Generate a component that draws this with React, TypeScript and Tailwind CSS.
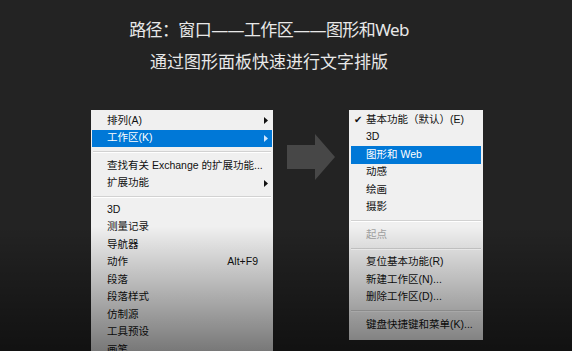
import React from "react";

type Item =
  | { kind: "sep" }
  | { kind: "row"; label: string; active?: boolean; sub?: boolean; shortcut?: string; check?: boolean; disabled?: boolean };

const leftItems: Item[] = [
  { kind: "row", label: "排列(A)", sub: true },
  { kind: "row", label: "工作区(K)", sub: true, active: true },
  { kind: "sep" },
  { kind: "row", label: "查找有关 Exchange 的扩展功能..." },
  { kind: "row", label: "扩展功能", sub: true },
  { kind: "sep" },
  { kind: "row", label: "3D" },
  { kind: "row", label: "测量记录" },
  { kind: "row", label: "导航器" },
  { kind: "row", label: "动作", shortcut: "Alt+F9" },
  { kind: "row", label: "段落" },
  { kind: "row", label: "段落样式" },
  { kind: "row", label: "仿制源" },
  { kind: "row", label: "工具预设" },
  { kind: "row", label: "画笔" },
];

const rightItems: Item[] = [
  { kind: "row", label: "基本功能（默认）(E)", check: true },
  { kind: "row", label: "3D" },
  { kind: "row", label: "图形和 Web", active: true },
  { kind: "row", label: "动感" },
  { kind: "row", label: "绘画" },
  { kind: "row", label: "摄影" },
  { kind: "sep" },
  { kind: "row", label: "起点", disabled: true },
  { kind: "sep" },
  { kind: "row", label: "复位基本功能(R)" },
  { kind: "row", label: "新建工作区(N)..." },
  { kind: "row", label: "删除工作区(D)..." },
  { kind: "sep" },
  { kind: "row", label: "键盘快捷键和菜单(K)..." },
];

function SubArrow({ white }: { white?: boolean }) {
  return (
    <svg width="4" height="7" viewBox="0 0 4 7" className="shrink-0">
      <path d="M0 0 L4 3.5 L0 7 Z" fill={white ? "#cfe6ff" : "#111"} />
    </svg>
  );
}

function Sep({ h }: { h: string }) {
  return (
    <div className={`flex flex-col justify-center px-[2px] ${h}`}>
      <div className="border-t border-[#d2d2d2] border-b border-b-white" />
    </div>
  );
}

function LeftMenu() {
  return (
    <div className="w-[182px] shrink-0 bg-[#f0f0f0] pt-[2px] pb-[4px]">
      {leftItems.map((it, i) => {
        if (it.kind === "sep") return <Sep key={i} h={i === 2 ? "h-[10px]" : "h-[9px]"} />;
        return (
          <div
            key={i}
            className={`mx-[1px] flex h-[17.5px] items-center pl-[15px] ${it.sub ? "pr-[4px]" : "pr-[14px]"} ${
              it.active ? "bg-[#0078d7] text-white" : "text-[#111]"
            }`}
          >
            <span className="flex-1 whitespace-nowrap">{it.label}</span>
            {it.shortcut && <span>{it.shortcut}</span>}
            {it.sub && <SubArrow white={it.active} />}
          </div>
        );
      })}
    </div>
  );
}

function RightMenu() {
  return (
    <div className="w-[134px] shrink-0 self-start bg-[#f0f0f0] pt-[1px] pb-[6px]">
      {rightItems.map((it, i) => {
        if (it.kind === "sep") return <Sep key={i} h="h-[10px]" />;
        return (
          <div
            key={i}
            className={`mx-[2px] flex h-[17.5px] items-center ${
              it.active ? "bg-[#0078d7] text-white" : it.disabled ? "text-[#a3a3a3]" : "text-[#111]"
            }`}
          >
            <span className="w-[15px] shrink-0 pl-[3px] text-[10px] leading-none">{it.check ? "✔" : ""}</span>
            <span className="whitespace-nowrap">{it.label}</span>
          </div>
        );
      })}
    </div>
  );
}

export default function App() {
  return (
    <div
      className="relative h-[351px] w-[572px] overflow-hidden bg-[#232323]"
      style={{ fontFamily: '"Noto Sans", "Noto Sans CJK SC", sans-serif' }}
    >
      <div className="flex flex-col items-center pt-[14px] pr-[34px] text-[17px] leading-[32px] text-[#e8e8e8]">
        <div className="tracking-[-0.6px]">路径：窗口——工作区——图形和Web</div>
        <div>通过图形面板快速进行文字排版</div>
      </div>

      <div
        className="mt-[32px] flex items-start pl-[91px] text-[10.5px]"
        style={{ fontFamily: '"Liberation Sans", "Noto Sans CJK SC", sans-serif' }}
      >
        <LeftMenu />
        <div className="mx-[14px] mt-[24px] shrink-0">
          <svg width="48" height="46" viewBox="0 0 48 46">
            <path d="M0 11 H28 V0 L48 23 L28 46 V35 H0 Z" fill="#474747" />
          </svg>
        </div>
        <RightMenu />
      </div>

      <div className="pointer-events-none absolute inset-x-0 bottom-0 h-[125px] bg-gradient-to-b from-transparent to-black/50" />
    </div>
  );
}
